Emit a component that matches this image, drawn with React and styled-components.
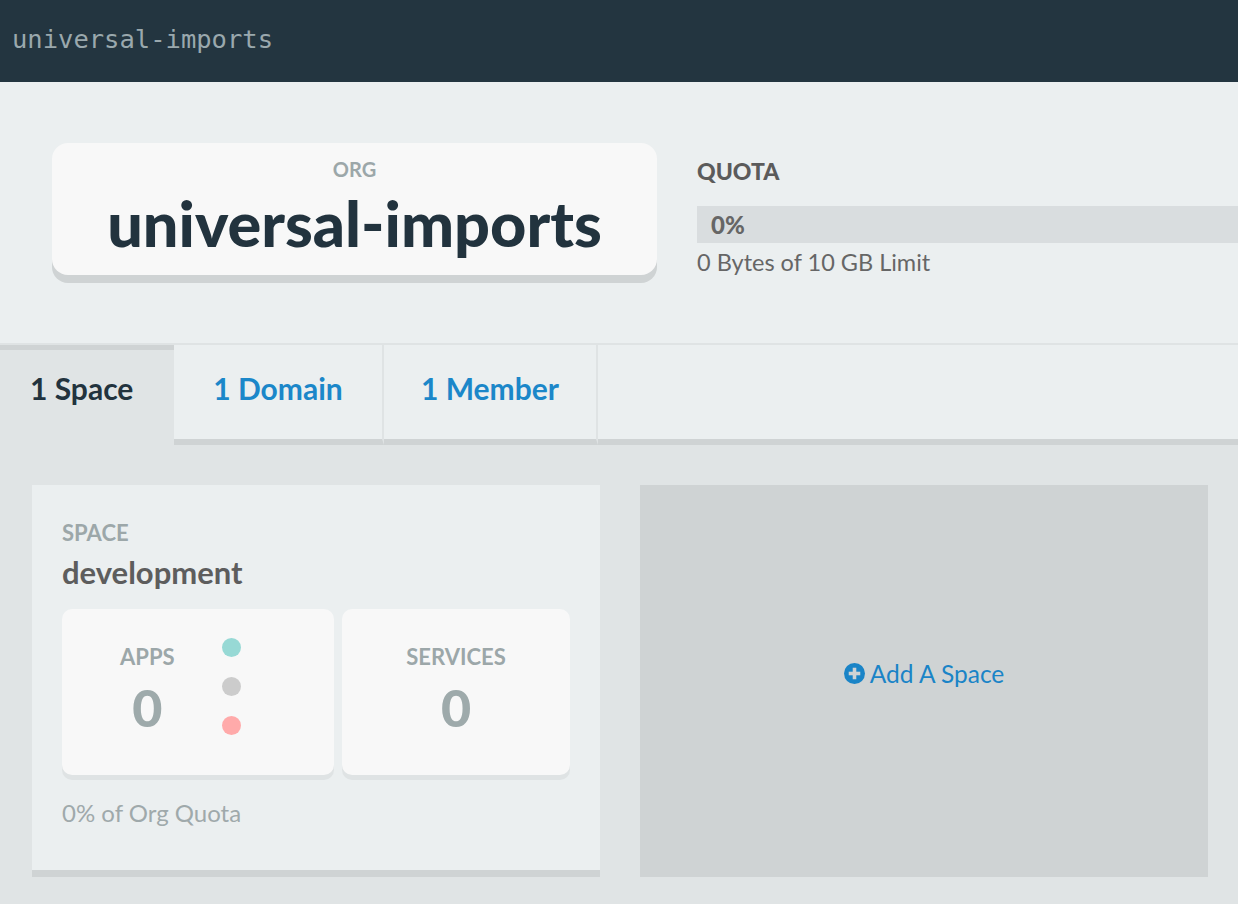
import React from 'react';
import styled, { createGlobalStyle } from 'styled-components';

const GlobalStyle = createGlobalStyle`
  html, body {
    margin: 0;
    padding: 0;
    background: #e0e4e5;
    font-family: 'Lato', 'Liberation Sans', sans-serif;
  }
`;

const Page = styled.div`
  width: 1238px;
  min-height: 904px;
  overflow: hidden;
  background: #e0e4e5;
`;

const TopBar = styled.header`
  height: 82px;
  background: #233540;
  display: flex;
  align-items: center;
  padding: 0 12px;
  box-sizing: border-box;
`;

const TopTitle = styled.span`
  font-family: 'DejaVu Sans Mono', 'Liberation Mono', monospace;
  font-size: 25.5px;
  color: #9aa8ad;
  margin-top: -4px;
`;

const OrgHeader = styled.section`
  background: #ebeff0;
  height: 263px;
  display: flex;
  align-items: flex-start;
  padding: 61px 0 0 52px;
  box-sizing: border-box;
  border-bottom: 2px solid #dfe3e4;
`;

const OrgCard = styled.div`
  width: 605px;
  height: 132px;
  background: #f8f8f8;
  border-radius: 16px;
  box-shadow: 0 8px 0 #cfd3d4;
  display: flex;
  flex-direction: column;
  align-items: center;
  box-sizing: border-box;
  padding-top: 16px;
`;

const SmallLabel = styled.div`
  font-size: ${(p) => p.size || 20}px;
  font-weight: 700;
  color: #9ca7a9;
  text-transform: uppercase;
  line-height: 1;
`;

const OrgName = styled.h1`
  margin: 12px 0 0;
  font-size: 63px;
  font-weight: 900;
  color: #22333e;
  line-height: 1;
`;

const Quota = styled.div`
  margin-left: 40px;
  flex: 1;
  padding-top: 17px;
`;

const QuotaTitle = styled.div`
  font-size: 23px;
  font-weight: 900;
  color: #5b5b5b;
  line-height: 1;
`;

const QuotaBar = styled.div`
  margin-top: 23px;
  height: 37px;
  background: #d9dddf;
  display: flex;
  align-items: center;
  padding-left: 14px;
  font-size: 24px;
  font-weight: 900;
  color: #666;
`;

const QuotaText = styled.div`
  margin-top: 8px;
  font-size: 23.5px;
  color: #666;
  line-height: 1;
`;

const Tabs = styled.nav`
  display: flex;
  height: 100px;
  background: #ebeff0;
`;

const Tab = styled.div`
  width: ${(p) => p.w}px;
  box-sizing: border-box;
  text-align: ${(p) => (p.active ? 'left' : 'center')};
  padding: ${(p) => (p.active ? '23px 0 0 30px' : '28px 0 0')};
  font-size: 30px;
  line-height: 30px;
  font-weight: 700;
  color: ${(p) => (p.active ? '#22333e' : '#1b87c9')};
  background: ${(p) => (p.active ? '#e0e4e5' : '#ebeff0')};
  border-top: ${(p) => (p.active ? '5px solid #cfd3d4' : '0')};
  border-bottom: ${(p) => (p.active ? '0' : '6px solid #cfd3d4')};
  border-right: ${(p) => (p.active ? '0' : '2px solid #dfe3e4')};
`;

const TabFill = styled.div`
  flex: 1;
  border-bottom: 6px solid #cfd3d4;
`;

const Content = styled.main`
  display: grid;
  grid-template-columns: 568px 568px;
  gap: 40px;
  padding: 40px 32px 0;
`;

const SpaceCard = styled.div`
  background: #ebeff0;
  box-shadow: 0 7px 0 #cfd3d4;
  height: 385px;
  box-sizing: border-box;
  padding: 37px 30px 0;
`;

const SpaceName = styled.div`
  margin-top: 13px;
  font-size: 31px;
  font-weight: 700;
  color: #5d5d5d;
  line-height: 1;
`;

const Tiles = styled.div`
  display: grid;
  grid-template-columns: 272px 228px;
  gap: 8px;
  margin-top: 21px;
`;

const Tile = styled.div`
  position: relative;
  height: 166px;
  background: #f8f8f8;
  border-radius: 10px;
  box-shadow: 0 5px 0 #dfe3e4;
  display: flex;
  flex-direction: column;
  align-items: ${(p) => (p.offset ? 'flex-start' : 'center')};
  padding-top: 37px;
  padding-left: ${(p) => (p.offset ? '58px' : '0')};
  box-sizing: border-box;
`;

const TileInner = styled.div`
  display: flex;
  flex-direction: column;
  align-items: center;
`;

const BigNum = styled.div`
  margin-top: 13px;
  font-size: 52px;
  font-weight: 900;
  color: #9eaaab;
  line-height: 1;
`;

const Dots = styled.div`
  position: absolute;
  left: 160px;
  top: 29px;
  display: flex;
  flex-direction: column;
  gap: 20px;
`;

const Dot = styled.span`
  width: 19px;
  height: 19px;
  border-radius: 50%;
  background: ${(p) => p.color};
`;

const Footnote = styled.div`
  margin-top: 23px;
  font-size: 24px;
  color: #9fa9ab;
`;

const AddPanel = styled.div`
  background: #cfd3d4;
  height: 392px;
  box-sizing: border-box;
  padding-bottom: 16px;
  display: flex;
  align-items: center;
  justify-content: center;
  gap: 5px;
  font-size: 24.5px;
  color: #1a84c7;
`;

const PlusIcon = () => (
  <svg width="21" height="21" viewBox="0 0 20 20">
    <circle cx="10" cy="10" r="10" fill="#1a84c7" />
    <rect x="4.5" y="8.3" width="11" height="3.4" fill="#cfd3d4" />
    <rect x="8.3" y="4.5" width="3.4" height="11" fill="#cfd3d4" />
  </svg>
);

const App = () => (
  <Page>
    <GlobalStyle />
    <TopBar>
      <TopTitle>universal-imports</TopTitle>
    </TopBar>
    <OrgHeader>
      <OrgCard>
        <SmallLabel>Org</SmallLabel>
        <OrgName>universal-imports</OrgName>
      </OrgCard>
      <Quota>
        <QuotaTitle>QUOTA</QuotaTitle>
        <QuotaBar>0%</QuotaBar>
        <QuotaText>0 Bytes of 10 GB Limit</QuotaText>
      </Quota>
    </OrgHeader>
    <Tabs>
      <Tab active w={174}>1 Space</Tab>
      <Tab w={210}>1 Domain</Tab>
      <Tab w={214}>1 Member</Tab>
      <TabFill />
    </Tabs>
    <Content>
      <SpaceCard>
        <SmallLabel size={22}>Space</SmallLabel>
        <SpaceName>development</SpaceName>
        <Tiles>
          <Tile offset>
            <TileInner>
              <SmallLabel size={22}>Apps</SmallLabel>
              <BigNum>0</BigNum>
            </TileInner>
            <Dots>
              <Dot color="#97d9d5" />
              <Dot color="#cccccc" />
              <Dot color="#ffaaaa" />
            </Dots>
          </Tile>
          <Tile>
            <SmallLabel size={22}>Services</SmallLabel>
            <BigNum>0</BigNum>
          </Tile>
        </Tiles>
        <Footnote>0% of Org Quota</Footnote>
      </SpaceCard>
      <AddPanel>
        <PlusIcon />
        Add A Space
      </AddPanel>
    </Content>
  </Page>
);

export default App;
